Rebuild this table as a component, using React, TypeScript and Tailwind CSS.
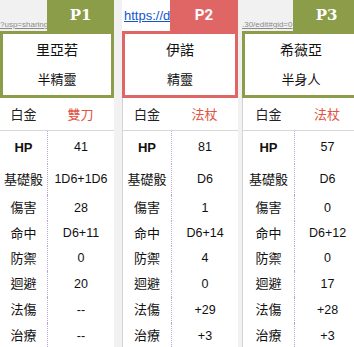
const cjk = { fontFamily: '"Liberation Sans", "Noto Sans CJK TC", sans-serif' }

type Col = {
  tab: string
  link: string
  name: string
  race: string
  weapon: string
  stats: string[]
}

const labels = ["HP", "基礎骰", "傷害", "命中", "防禦", "迴避", "法傷", "治療"]
const rowH = ["h-[33px]", "h-[31px]", "h-[26px]", "h-[25px]", "h-[25px]", "h-[26px]", "h-[26px]", "h-[26px]"]

const data: Col[] = [
  { tab: "P1", link: "?usp=sharing", name: "里亞若", race: "半精靈", weapon: "雙刀", stats: ["41", "1D6+1D6", "28", "D6+11", "0", "20", "--", "--"] },
  { tab: "P2", link: "https://d", name: "伊諾", race: "精靈", weapon: "法杖", stats: ["81", "D6", "1", "D6+14", "4", "0", "+29", "+3"] },
  { tab: "P3", link: ".30/edit#gid=0", name: "希薇亞", race: "半身人", weapon: "法杖", stats: ["57", "D6", "0", "D6+12", "0", "17", "+28", "+3"] },
]

function Card({ c, i }: { c: Col; i: number }) {
  const isRed = i === 1
  const colW = i === 0 ? "w-[114px]" : i === 1 ? "w-[116px]" : "w-[118px]"
  const labelW = i === 0 ? "w-[47px]" : i === 1 ? "w-[48px]" : "w-[51px]"
  const border = isRed ? "border-[#e06666]" : "border-[#8c9d4a]"
  const tabBg = isRed ? "bg-[#e06666]" : "bg-[#8c9d4a]"

  return (
    <div className={`flex shrink-0 flex-col ${colW}`} style={cjk}>
      {/* header strip: link + tab */}
      <div className="flex h-[33px] items-end">
        <div className={`flex h-full ${labelW} shrink-0 items-end ${isRed ? "bg-white pl-[2px]" : ""}`}>
          {isRed ? (
            <span className="mb-[6px] whitespace-nowrap text-[13px] text-[#1155cc] underline">{c.link}</span>
          ) : (
            <span className="mb-[2px] whitespace-nowrap text-[8px] leading-none text-[#8a8a8a] underline">{c.link}</span>
          )}
        </div>
        <div className={`flex h-[31px] flex-1 items-center justify-center ${tabBg}`}>
          <span
            className="text-[15px] font-bold text-white"
            style={{ fontFamily: isRed ? "Roboto, sans-serif" : '"DejaVu Serif", serif' }}
          >
            {c.tab}
          </span>
        </div>
      </div>

      {/* name box */}
      <div className={`flex h-[67px] flex-col border-[3px] bg-white text-[#111] ${border}`}>
        <div className="flex h-[30px] items-center justify-center pt-[2px] text-[14px]">{c.name}</div>
        <div className="flex h-[31px] items-center justify-center text-[13px]">{c.race}</div>
      </div>

      {/* body */}
      <div className={`flex flex-1 flex-col bg-white ${i > 0 ? "border-l border-[#d4d4d4]" : ""}`}>
        <div className="flex h-[33px] items-center border-b border-[#d9d9d9] pt-[2px] text-[13px]">
          <div className={`${labelW} shrink-0 text-center text-[#222]`}>白金</div>
          <div className="flex-1 text-center text-[#e0533f]">{c.weapon}</div>
        </div>
        {labels.map((l, k) => (
          <div key={l} className={`flex ${rowH[k]} text-[13px] text-[#111]`}>
            <div className={`flex ${labelW} shrink-0 items-center justify-center ${l === "HP" ? "font-bold" : ""}`}>{l}</div>
            <div className="flex flex-1 items-center justify-center border-l border-dotted border-[#b4a7d6] text-[12.5px]">
              {c.stats[k]}
            </div>
          </div>
        ))}
      </div>
    </div>
  )
}

export default function App() {
  return (
    <div className="flex h-[347px] w-[354px] overflow-hidden bg-[#f1f1f1]">
      <Card c={data[0]} i={0} />
      <div className="w-[8px] shrink-0" />
      <Card c={data[1]} i={1} />
      <div className="w-[4px] shrink-0" />
      <Card c={data[2]} i={2} />
    </div>
  )
}
